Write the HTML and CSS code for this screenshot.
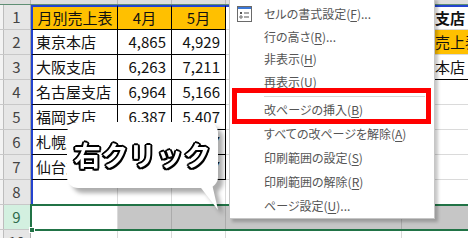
FILE: index.html
```html
<!DOCTYPE html>
<html lang="ja">
<head>
    <meta charset="UTF-8">
    <title>右クリックメニュー - 改ページの挿入</title>
    <link rel="stylesheet" href="styles.css">
</head>
<body>
    <div class="sheet">
        <div class="colhead">
            <div class="ch corner"></div>
            <div class="ch a"></div>
            <div class="ch b"></div>
            <div class="ch b"></div>
            <div class="ch d"></div>
            <div class="ch e"></div>
        </div>

        <div class="row">
            <div class="rh">1</div>
            <div class="c a t top hd ctr">月別売上表</div>
            <div class="c b t top hd ctr">4月</div>
            <div class="c b t top hd ctr">5月</div>
            <div class="c d top"></div>
            <div class="c e top bold">大阪支店</div>
        </div>
        <div class="row">
            <div class="rh">2</div>
            <div class="c a t">東京本店</div>
            <div class="c b t num">4,865</div>
            <div class="c b t num">4,929</div>
            <div class="c d"></div>
            <div class="c e hd nogrid">支店売上表</div>
        </div>
        <div class="row">
            <div class="rh">3</div>
            <div class="c a t">大阪支店</div>
            <div class="c b t num">6,263</div>
            <div class="c b t num">7,211</div>
            <div class="c d"></div>
            <div class="c e under">東京本店</div>
        </div>
        <div class="row">
            <div class="rh">4</div>
            <div class="c a t">名古屋支店</div>
            <div class="c b t num">6,964</div>
            <div class="c b t num">5,166</div>
            <div class="c d"></div>
            <div class="c e"></div>
        </div>
        <div class="row">
            <div class="rh">5</div>
            <div class="c a t">福岡支店</div>
            <div class="c b t num">6,387</div>
            <div class="c b t num">5,407</div>
            <div class="c d"></div>
            <div class="c e"></div>
        </div>
        <div class="row">
            <div class="rh">6</div>
            <div class="c a t">札幌支店</div>
            <div class="c b t num">3,542</div>
            <div class="c b t num">3,797</div>
            <div class="c d"></div>
            <div class="c e"></div>
        </div>
        <div class="row">
            <div class="rh">7</div>
            <div class="c a t">仙台支店</div>
            <div class="c b t num">4,018</div>
            <div class="c b t num">4,527</div>
            <div class="c d"></div>
            <div class="c e"></div>
        </div>
        <div class="row">
            <div class="rh">8</div>
            <div class="c a"></div>
            <div class="c b"></div>
            <div class="c b"></div>
            <div class="c d"></div>
            <div class="c e"></div>
        </div>
        <div class="row">
            <div class="rh sel">9</div>
            <div class="c a noblue"></div>
            <div class="c b hl"></div>
            <div class="c b hl"></div>
            <div class="c d hl"></div>
            <div class="c e hl"></div>
        </div>
        <div class="row">
            <div class="rh">10</div>
            <div class="c a noblue"></div>
            <div class="c b"></div>
            <div class="c b"></div>
            <div class="c d"></div>
            <div class="c e"></div>
        </div>
    </div>

    <!-- 行9の選択枠 -->
    <div class="selbox"><span class="handle"></span></div>

    <!-- 吹き出し -->
    <div class="callout">
        <div class="bubble">右クリック</div>
        <svg class="tail" width="24" height="30" viewBox="0 0 24 30">
            <polygon points="0,0 14,0 20,26" fill="#fff"/>
        </svg>
    </div>

    <!-- 右クリックメニュー -->
    <div class="menu">
        <div class="mi short">
            <span class="ico">
                <svg width="15" height="16" viewBox="0 0 15 16">
                    <rect x="0.5" y="0.5" width="14" height="15" fill="#fff" stroke="#6a6a6a"/>
                    <rect x="1" y="1" width="13" height="2" fill="#3b78d8"/>
                    <rect x="3" y="6" width="2" height="2" fill="#555"/>
                    <rect x="7" y="6.5" width="5" height="1" fill="#555"/>
                    <circle cx="4" cy="11" r="1.2" fill="none" stroke="#555" stroke-width="0.9"/>
                    <rect x="7" y="10.5" width="5" height="1" fill="#555"/>
                </svg>
            </span>セルの書式設定(<u>F</u>)...
        </div>
        <div class="mi short"><span class="ico"></span>行の高さ(<u>R</u>)...</div>
        <div class="mi short"><span class="ico"></span>非表示(<u>H</u>)</div>
        <div class="mi short"><span class="ico"></span>再表示(<u>U</u>)</div>
        <div class="sep"></div>
        <div class="mi"><span class="ico"></span>改ページの挿入(<u>B</u>)</div>
        <div class="mi"><span class="ico"></span>すべての改ページを解除(<u>A</u>)</div>
        <div class="mi"><span class="ico"></span>印刷範囲の設定(<u>S</u>)</div>
        <div class="mi"><span class="ico"></span>印刷範囲の解除(<u>R</u>)</div>
        <div class="mi"><span class="ico"></span>ページ設定(<u>U</u>)...</div>
    </div>

    <!-- 強調枠 -->
    <div class="mark"></div>
</body>
</html>
```

FILE: styles.css
```css
/* 全体 */
* {
    box-sizing: border-box;
}

body {
    margin: 0;
    width: 468px;
    height: 238px;
    overflow: hidden;
    position: relative;
    background: #fff;
    font-family: "Noto Sans CJK JP", "Noto Sans", sans-serif;
}

/* シート */
.sheet {
    display: flex;
    flex-direction: column;
}

.colhead {
    display: flex;
    height: 5px;
    border-bottom: 1px solid #5f8f74;
}

.ch {
    height: 4px;
    background: #dedede;
    border-right: 1px solid #b8b8b8;
    flex-shrink: 0;
}

.ch.corner {
    width: 31px;
}

.row {
    display: flex;
    height: 25px;
}

.rh {
    width: 31px;
    flex-shrink: 0;
    height: 25px;
    background: linear-gradient(to right, #f3f3f3 0 3px, #bdbdbd 3px 4px, #e6e6e6 4px);
    border-right: 1px solid #a9a9a9;
    border-bottom: 1px solid #c8c8c8;
    color: #444;
    font-size: 15px;
    line-height: 24px;
    text-align: center;
    padding-left: 3px;
}

.rh.sel {
    background: linear-gradient(to right, #f3f3f3 0 3px, #bdbdbd 3px 4px, #d3f0e0 4px);
    color: #2f6b4c;
}

.c {
    flex-shrink: 0;
    height: 25px;
    border-right: 1px solid #dadada;
    border-bottom: 1px solid #dadada;
    font-size: 15px;
    line-height: 23px;
    color: #111;
    padding: 0 3px;
    white-space: nowrap;
    overflow: hidden;
}

.a {
    width: 87px;
    border-left: 2px solid #2443cf;
}

.a.noblue {
    border-left: none;
    width: 87px;
}

.b {
    width: 54px;
}

.d {
    width: 176px;
}

.e {
    width: 80px;
    overflow: visible;
}

.ch.a {
    border-left: none;
}

.t {
    border-right-color: #000;
    border-bottom-color: #000;
}

.top {
    border-top: 2px solid #2443cf;
    line-height: 21px;
}

.hd {
    background: #ffc000;
}

.ctr {
    text-align: center;
}

.num {
    text-align: right;
    padding-right: 5px;
}

.bold {
    font-weight: 700;
}

.nogrid {
    border-right-color: #ffc000;
}

.under {
    border-bottom-color: #000;
}

.hl {
    background: #c6c6c6;
    border-right-color: #ababab;
}

/* 選択枠 */
.selbox {
    position: absolute;
    left: 30px;
    top: 204px;
    width: 450px;
    height: 27px;
    border: 2px solid #217346;
}

.selbox .handle {
    position: absolute;
    left: -3px;
    bottom: -4px;
    width: 6px;
    height: 6px;
    background: #217346;
    border: 1px solid #fff;
}

/* 吹き出し */
.callout {
    position: absolute;
    left: 67px;
    top: 122px;
    filter: drop-shadow(5px 5px 2px rgba(0, 0, 0, 0.32));
}

.bubble {
    width: 151px;
    height: 66px;
    background: #fff;
    border-radius: 11px;
    font-size: 27px;
    font-weight: 700;
    line-height: 66px;
    text-align: center;
    letter-spacing: 0.5px;
    color: #fff;
    text-shadow:
        2px 0 #000, -2px 0 #000, 0 2px #000, 0 -2px #000,
        1.5px 1.5px #000, -1.5px 1.5px #000, 1.5px -1.5px #000, -1.5px -1.5px #000;
}

.tail {
    position: absolute;
    left: 131px;
    top: 62px;
}

/* メニュー */
.menu {
    position: absolute;
    left: 229px;
    top: -3px;
    width: 206px;
    padding-top: 4.5px;
    background: #fff;
    border: 1px solid #c6c6c6;
    box-shadow: 3px 3px 3px rgba(0, 0, 0, 0.22);
    font-size: 12px;
    color: #555;
    font-feature-settings: "palt";
}

.mi {
    display: flex;
    align-items: center;
    height: 24px;
    white-space: nowrap;
}

.mi.short {
    height: 22.5px;
}

.mi .ico {
    width: 34px;
    padding-left: 7px;
    display: flex;
    align-items: center;
    flex-shrink: 0;
}

.mi u {
    text-underline-offset: 2px;
}

.sep {
    height: 1px;
    margin: 3px 9px 1px 34px;
    background: #d6d6d6;
}

/* 強調枠 */
.mark {
    position: absolute;
    left: 232px;
    top: 88px;
    width: 199px;
    height: 36px;
    border: 5px solid #ff0000;
}
```
